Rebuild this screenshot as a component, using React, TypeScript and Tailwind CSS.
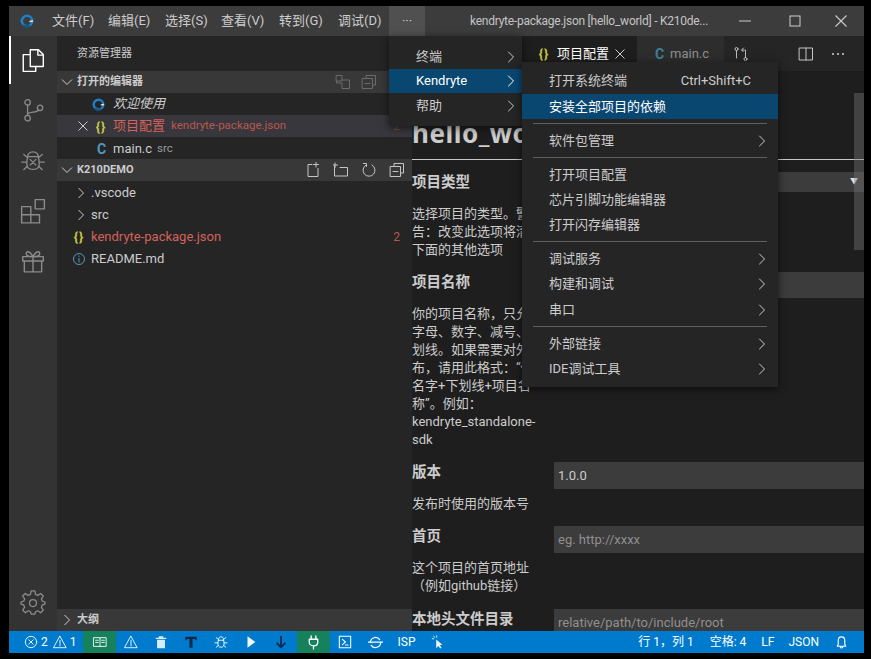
import type { ReactNode } from "react";

const FONT = { fontFamily: 'Roboto, "Noto Sans CJK SC", sans-serif' };

function Icon({ size = 16, box = 16, className, children }: { size?: number; box?: number; className?: string; children: ReactNode }) {
  return (
    <svg
      width={size}
      height={size}
      viewBox={`0 0 ${box} ${box}`}
      fill="none"
      stroke="currentColor"
      strokeWidth={1}
      strokeLinecap="round"
      strokeLinejoin="round"
      className={className}
    >
      {children}
    </svg>
  );
}

function Chevron({ className }: { className?: string }) {
  return (
    <Icon size={16} className={className}>
      <path d="M5.5 3 L10.5 8 L5.5 13" />
    </Icon>
  );
}

function SmallChevron({ down }: { down?: boolean }) {
  return (
    <svg width="12" height="12" viewBox="0 0 12 12" fill="none" stroke="currentColor" strokeWidth={1}>
      {down ? <path d="M1 3.5 L6 8.5 L11 3.5" /> : <path d="M3.5 1 L8.5 6 L3.5 11" />}
    </svg>
  );
}

function Logo({ size = 14 }: { size?: number }) {
  return (
    <svg width={size} height={size} viewBox="0 0 14 14" fill="none">
      <circle cx="7" cy="7" r="5.2" stroke="#1f7fc4" strokeWidth={2.6} />
      <path d="M3 11 A5.4 5.4 0 0 0 9.5 11.8" stroke="#14557f" strokeWidth={2.4} />
      <path d="M9.5 7.5 L13 7" stroke="#dfe8ee" strokeWidth={1.4} />
    </svg>
  );
}

function ActivityIcons() {
  return (
    <>
      <div className="flex h-[48px] w-full items-center justify-center border-l-2 border-white text-white">
        <Icon size={26} box={24} className="-ml-[2px]">
          <path d="M9.5 2.5 H17 L21.5 7 V18 H9.5 Z" fill="#333333" strokeWidth={1.3} />
          <path d="M16.5 2.5 V7.5 H21.5" strokeWidth={1.3} />
          <path d="M9.5 7 H3 V22.5 H14.5 V18" strokeWidth={1.3} />
        </Icon>
      </div>
      <div className="flex h-[52px] w-full items-center justify-center text-[#8b8b8b]">
        <Icon size={26} box={24}>
          <circle cx="7" cy="5" r="2.5" strokeWidth={1.2} />
          <circle cx="7" cy="19.5" r="2.5" strokeWidth={1.2} />
          <circle cx="18.5" cy="10" r="2.5" strokeWidth={1.2} />
          <path d="M7 7.5 V17 M7 16 C8 13 16 15 17 12" strokeWidth={1.2} />
        </Icon>
      </div>
      <div className="flex h-[50px] w-full items-center justify-center text-[#8b8b8b]">
        <Icon size={26} box={24}>
          <path d="M7 9 C7 5 9 3.5 12 3.5 C15 3.5 17 5 17 9 C18 13 18 16 17 17.5 C15.5 20.5 8.5 20.5 7 17.5 C6 16 6 13 7 9 Z" strokeWidth={1.2} />
          <path d="M7 8 H17 M9.3 10.5 L14.7 15.8 M14.7 10.5 L9.3 15.8" strokeWidth={1.2} />
          <path d="M6.5 8.5 L3.5 6 M6 13 H1.5 M6.5 17 L3.5 20 M17.5 8.5 L20.5 6 M18 13 H22.5 M17.5 17 L20.5 20" strokeWidth={1.2} />
        </Icon>
      </div>
      <div className="flex h-[50px] w-full items-center justify-center text-[#8b8b8b]">
        <Icon size={26} box={24}>
          <path d="M1.5 8 H10 V15.5 H18 V23 H1.5 Z M1.5 15.5 H10 V23" strokeWidth={1.3} />
          <rect x="14" y="1.5" width="8.5" height="8.5" strokeWidth={1.3} />
        </Icon>
      </div>
      <div className="flex h-[50px] w-full items-center justify-center text-[#8b8b8b]">
        <Icon size={26} box={24}>
          <path d="M2.5 8 H21.5 V12 H2.5 Z M4 12 V22 H20 V12 M12 8 V22" strokeWidth={1.3} />
          <path d="M12 8 C9 2 5 2.5 6 6 C6.3 7.3 8 8 12 8 C16 8 17.7 7.3 18 6 C19 2.5 15 2 12 8" strokeWidth={1.3} />
        </Icon>
      </div>
    </>
  );
}

function Gear() {
  return (
    <svg width="26" height="26" viewBox="0 0 24 24" fill="none" stroke="#8b8b8b" strokeWidth={1.2} strokeLinejoin="round">
      <path d="M10.3 1.8 H13.7 L14.3 5 L16.4 5.9 L19.1 4.1 L21.5 6.5 L19.7 9.2 L20.6 11.3 L23 12 V14 L20.6 14.7 L19.7 16.8 L21.5 19.5 L19.1 21.9 L16.4 20.1 L14.3 21 L13.7 23.2 H10.3 L9.7 21 L7.6 20.1 L4.9 21.9 L2.5 19.5 L4.3 16.8 L3.4 14.7 L1 14 V12 L3.4 11.3 L4.3 9.2 L2.5 6.5 L4.9 4.1 L7.6 5.9 L9.7 5 Z" />
      <circle cx="12" cy="13" r="3.2" />
    </svg>
  );
}

function Braces({ className }: { className?: string }) {
  return (
    <span className={`w-[14px] text-center text-[13px] leading-none font-bold tracking-[1px] text-[#cbcb41] ${className ?? ""}`}>{"{}"}</span>
  );
}

function SectionHeader({ open, title, children }: { open?: boolean; title: string; children?: ReactNode }) {
  return (
    <div className="flex h-[22px] shrink-0 items-center bg-[#383838] pl-[4px] text-[#cccccc]">
      <SmallChevron down={open} />
      <span className="ml-[4px] text-[11px] font-bold">{title}</span>
      <div className="ml-auto flex items-center">{children}</div>
    </div>
  );
}

function MenuRow({
  label,
  active,
  arrow,
  shortcut,
  height,
  arrowClass = "mr-[8px]",
}: {
  label: string;
  active?: boolean;
  arrow?: boolean;
  shortcut?: string;
  height: string;
  arrowClass?: string;
}) {
  return (
    <div className={`flex items-center pl-[27px] text-[13px] ${height} ${active ? "bg-[#094771] text-white" : "text-[#cccccc]"}`}>
      <span>{label}</span>
      {shortcut ? <span className="ml-auto pr-[27px]">{shortcut}</span> : null}
      {arrow ? <Chevron className={`ml-auto ${arrowClass}`} /> : null}
    </div>
  );
}

function Sep() {
  return <div className="mx-[11px] my-[4px] h-px bg-[#606060]" />;
}

function Field({ title, children, control, gap }: { title: string; children: ReactNode; control: ReactNode; gap: string }) {
  return (
    <div className={`grid grid-cols-[142px_1fr] ${gap}`}>
      <div className="text-[13px] leading-[18px] text-[#cccccc]">
        <div className="mb-[12px] text-[14.5px] leading-[21px] font-bold">{title}</div>
        {children}
      </div>
      {control}
    </div>
  );
}

function Input({ value, placeholder, h }: { value?: string; placeholder?: string; h: string }) {
  return (
    <div className={`flex items-center bg-[#3c3c3c] px-[4px] text-[13px] ${h} ${placeholder ? "text-[#8f8f8f]" : "text-[#cccccc]"}`}>
      {value ?? placeholder}
    </div>
  );
}

export default function App() {
  return (
    <div className="relative h-screen w-screen overflow-hidden bg-black pt-[6px] pr-[7px] pb-[6px] pl-[9px]" style={FONT}>
      <div className="flex h-full flex-col">
        {/* title bar */}
        <div className="flex h-[30px] shrink-0 items-center bg-[#3c3c3c] text-[13px] whitespace-nowrap text-[#cccccc]">
          <div className="flex w-[36px] justify-center">
            <Logo />
          </div>
          <div className="ml-[7px] flex w-[337px]">
            <span className="w-[56px]">文件(F)</span>
            <span className="w-[57px]">编辑(E)</span>
            <span className="w-[56px]">选择(S)</span>
            <span className="w-[58px]">查看(V)</span>
            <span className="w-[59px]">转到(G)</span>
            <span>调试(D)</span>
          </div>
          <div className="flex h-full w-[36px] items-center justify-center bg-[#505050]">···</div>
          <div className="ml-[45px] text-[12px] tracking-[-0.25px] text-[#c4c4c4]">kendryte-package.json [hello_world] - K210de...</div>
          <div className="ml-auto flex h-full items-center pr-[17px]">
            <svg width="12" height="12" viewBox="0 0 12 12" stroke="#cccccc" className="mr-[38px]">
              <path d="M0 6 H12" />
            </svg>
            <svg width="12" height="12" viewBox="0 0 12 12" fill="none" stroke="#cccccc" className="mr-[34px]">
              <rect x="1" y="1" width="10" height="10" />
            </svg>
            <svg width="12" height="12" viewBox="0 0 12 12" stroke="#cccccc" strokeWidth={1.1}>
              <path d="M0.5 0.5 L11.5 11.5 M11.5 0.5 L0.5 11.5" />
            </svg>
          </div>
        </div>

        <div className="flex min-h-0 flex-1">
          {/* activity bar */}
          <div className="flex w-[48px] shrink-0 flex-col items-center bg-[#333333]">
            <ActivityIcons />
            <div className="mt-auto mb-[16px]">
              <Gear />
            </div>
          </div>

          {/* side bar */}
          <div className="flex w-[355px] shrink-0 flex-col bg-[#252526] text-[13px] text-[#cccccc]">
            <div className="flex h-[35px] shrink-0 items-center pt-[2px] pl-[20px] text-[11px]">资源管理器</div>
            <SectionHeader open title="打开的编辑器">
              <div className="mr-[35px] flex gap-[10px] text-[#6b6b6b]">
                <Icon>
                  <path d="M1.5 1.5 H7 V7 H1.5 Z M7 6 H14.5 V14.5 H7 V9 H1.5 V7" />
                </Icon>
                <Icon>
                  <path d="M5 4 V1.5 H14.5 V11 H12 M1.5 4.5 H11.5 V14.5 H1.5 Z M4 9.5 H9" />
                </Icon>
              </div>
            </SectionHeader>
            <div className="flex h-[22px] shrink-0 items-center pl-[35px]">
              <Logo size={13} />
              <span className="ml-[8px] italic">欢迎使用</span>
            </div>
            <div className="flex h-[22px] shrink-0 items-center bg-[#37373d] pl-[21px]">
              <svg width="10" height="10" viewBox="0 0 10 10" stroke="#cccccc">
                <path d="M0.5 0.5 L9.5 9.5 M9.5 0.5 L0.5 9.5" />
              </svg>
              <Braces className="ml-[6px]" />
              <span className="ml-[5px] text-[#d4625a]">项目配置</span>
              <span className="ml-[6px] text-[11.5px] text-[#b9574f]">kendryte-package.json</span>
              <span className="mr-[12px] ml-auto text-[12px] text-[#7c4540]">2</span>
            </div>
            <div className="flex h-[22px] shrink-0 items-center pt-[1px] pl-[40px]">
              <span className="w-[8px] text-[14px] leading-none font-bold text-[#519aba]">C</span>
              <span className="ml-[8px]">main.c</span>
              <span className="ml-[5px] text-[11.5px] text-[#999999]">src</span>
            </div>
            <SectionHeader open title="K210DEMO">
              <div className="mr-[7px] flex gap-[12px] text-[#c5c5c5]">
                <Icon>
                  <path d="M7 2.5 H3 V14.5 H13 V6.5 M11 0.5 V5 M8.5 2.5 H13.5" />
                </Icon>
                <Icon>
                  <path d="M1.5 4 V14 H14.5 V5.5 H7 M2 1 V5.5 M0 3 H4.5" />
                </Icon>
                <Icon>
                  <path d="M5 3 A6 6 0 1 0 11 3 M2.5 1.5 H5.5 V4.5" />
                </Icon>
                <Icon>
                  <path d="M5 4 V1.5 H14.5 V11 H12 M1.5 4.5 H11.5 V14.5 H1.5 Z M4 9.5 H9" />
                </Icon>
              </div>
            </SectionHeader>
            <div className="flex h-[22px] shrink-0 items-center pt-[1px] pl-[18px]">
              <SmallChevron />
              <span className="ml-[4px]">.vscode</span>
            </div>
            <div className="flex h-[22px] shrink-0 items-center pt-[1px] pl-[18px]">
              <SmallChevron />
              <span className="ml-[4px]">src</span>
            </div>
            <div className="flex h-[22px] shrink-0 items-center pt-[1px] pl-[15px]">
              <Braces />
              <span className="ml-[5px] text-[#d4625a]">kendryte-package.json</span>
              <span className="mr-[12px] ml-auto text-[12px] text-[#b9574f]">2</span>
            </div>
            <div className="flex h-[22px] shrink-0 items-center pt-[1px] pl-[15px]">
              <svg width="14" height="14" viewBox="0 0 14 14" fill="none" stroke="#519aba">
                <circle cx="7" cy="7" r="5.5" />
                <path d="M7 6 V10.5 M7 3.5 V4.8" />
              </svg>
              <span className="ml-[5px]">README.md</span>
            </div>
            <div className="mt-auto">
              <SectionHeader title="大纲" />
            </div>
          </div>

          {/* editor */}
          <div className="relative flex min-w-0 flex-1 flex-col overflow-hidden bg-[#1e1e1e]">
            <div className="flex h-[35px] shrink-0 items-center bg-[#252526] text-[13px]">
              <div className="w-[110px] self-stretch" />
              <div className="flex h-full w-[115px] items-center bg-[#1e1e1e] pl-[15px] text-[#ffffff]">
                <Braces />
                <span className="ml-[6px]">项目配置</span>
                <svg width="10" height="10" viewBox="0 0 10 10" stroke="#cccccc" className="ml-[6px]">
                  <path d="M0.5 0.5 L9.5 9.5 M9.5 0.5 L0.5 9.5" />
                </svg>
              </div>
              <div className="flex h-full w-[87px] items-center bg-[#2d2d2d] pl-[18px] text-[#8f8f8f]">
                <span className="w-[8px] text-[14px] leading-none font-bold text-[#3f7f9b]">C</span>
                <span className="ml-[7px]">main.c</span>
              </div>
              <Icon size={16} className="ml-[9px] text-[#c5c5c5]">
                <circle cx="3.5" cy="3" r="1.5" />
                <circle cx="12.5" cy="13" r="1.5" />
                <path d="M3.5 4.5 V12 M12.5 11.5 V4 H8.5 M10.5 2 L8.5 4 L10.5 6" strokeDasharray="2 1" />
              </Icon>
              <div className="ml-auto mr-[18px] flex items-center gap-[16px] text-[#c5c5c5]">
                <Icon>
                  <rect x="1.5" y="2" width="13" height="12" />
                  <path d="M8 2 V14" />
                </Icon>
                <svg width="16" height="16" viewBox="0 0 16 16" fill="currentColor">
                  <circle cx="3" cy="8" r="1.1" />
                  <circle cx="8" cy="8" r="1.1" />
                  <circle cx="13" cy="8" r="1.1" />
                </svg>
              </div>
            </div>

            <div className="min-h-0 flex-1 overflow-hidden">
              <h1
                className="mt-[43px] h-[45px] text-[26px] leading-[38px] font-bold tracking-[0.5px] text-[#cccccc]"
                style={{ fontFamily: '"Noto Sans", sans-serif' }}
              >
                hello_world
              </h1>
              <div className="h-px bg-[#c8c8c8]" />
              <div className="mt-[12px] flex flex-col">
                <Field
                  title="项目类型"
                  gap="pb-[13px]"
                  control={
                    <div className="flex h-[20px] items-center justify-end bg-[#3c3c3c] pr-[6px] text-[8px] text-[#e0e0e0]">▼</div>
                  }
                >
                  选择项目的类型。警
                  <br />
                  告：改变此选项将清
                  <br />
                  下面的其他选项
                </Field>
                <Field title="项目名称" gap="pb-[13px]" control={<Input h="h-[26px]" />}>
                  你的项目名称，只允
                  <br />
                  字母、数字、减号、下
                  <br />
                  划线。如果需要对外发
                  <br />
                  布，请用此格式：“你的
                  <br />
                  名字+下划线+项目名
                  <br />
                  称”。例如：
                  <br />
                  kendryte_standalone-
                  <br />
                  sdk
                </Field>
                <Field title="版本" gap="pb-[13px]" control={<Input value="1.0.0" h="h-[27px]" />}>
                  发布时使用的版本号
                </Field>
                <Field title="首页" gap="pb-[14px]" control={<Input placeholder="eg. http://xxxx" h="h-[27px]" />}>
                  这个项目的首页地址
                  <br />
                  （例如github链接）
                </Field>
                <Field title="本地头文件目录" gap="pb-0" control={<Input placeholder="relative/path/to/include/root" h="h-[27px]" />}>
                  {""}
                </Field>
              </div>
            </div>
            {/* scrollbar */}
            <div className="absolute top-[57px] right-0 h-[157px] w-[10px] bg-[#79797966]" />
          </div>
        </div>

        {/* status bar */}
        <div className="flex h-[22px] shrink-0 items-center bg-[#007acc] text-[12px] text-white">
          <div className="ml-[15px] flex w-[59px] items-center gap-[3px]">
            <Icon size={14}>
              <circle cx="8" cy="8" r="6.5" />
              <path d="M5.5 5.5 L10.5 10.5 M10.5 5.5 L5.5 10.5" />
            </Icon>
            <span>2</span>
            <Icon size={14} className="ml-[2px]">
              <path d="M8 1.5 L15 14.5 H1 Z M8 6 V10.5 M8 11.5 V12.5" />
            </Icon>
            <span>1</span>
          </div>
          <div className="flex h-full w-[33px] items-center justify-center bg-[#16825d]">
            <Icon size={14}>
              <path d="M1 3 H7.5 L8 4 L8.5 3 H15 V13 H1 Z M8 4 V13 M3 6 H6 M3 8.5 H6 M10 6 H13 M10 8.5 H13" />
            </Icon>
          </div>
          <div className="flex w-[30px] justify-center">
            <Icon size={14}>
              <path d="M8 1.5 L15 14.5 H1 Z M8 6 V10.5 M8 11.5 V12.5" />
            </Icon>
          </div>
          <div className="flex w-[30px] justify-center">
            <svg width="14" height="14" viewBox="0 0 16 16" fill="#d8ecf8">
              <path d="M5.5 1.5 H10.5 V3 H14 V4.5 H2 V3 H5.5 Z M3.5 5.5 H12.5 V15 H3.5 Z" />
            </svg>
          </div>
          <div className="flex w-[30px] justify-center">
            <svg width="14" height="14" viewBox="0 0 16 16" fill="#0b2a4a">
              <path d="M1.5 2 H14.5 V6 H13 L12.5 4.5 H9.8 V14.5 H6.2 V4.5 H3.5 L3 6 H1.5 Z" />
            </svg>
          </div>
          <div className="flex w-[30px] justify-center">
            <Icon size={14}>
              <path d="M5 6 C5 3 6.5 2 8 2 C9.5 2 11 3 11 6 C11.7 9 11.7 11 11 12.5 C10 14.5 6 14.5 5 12.5 C4.3 11 4.3 9 5 6 Z M5 6 H11 M5 5 L2.5 3 M4.5 9 H1 M5 12 L2.5 14 M11 5 L13.5 3 M11.5 9 H15 M11 12 L13.5 14" />
            </Icon>
          </div>
          <div className="flex w-[30px] justify-center">
            <svg width="14" height="14" viewBox="0 0 16 16" fill="#f2f8fc">
              <path d="M4 1.5 L13 8 L4 14.5 Z" />
            </svg>
          </div>
          <div className="flex w-[30px] justify-center">
            <svg width="14" height="14" viewBox="0 0 16 16" fill="none" stroke="#0b2a4a" strokeWidth={2}>
              <path d="M8 1 V14 M3 9 L8 14 L13 9" />
            </svg>
          </div>
          <div className="ml-[1px] flex h-full w-[33px] items-center justify-center bg-[#16825d]">
            <Icon size={15}>
              <path d="M5.5 1 V4.5 M10.5 1 V4.5 M3.5 4.5 H12.5 V8 C12.5 10 10.5 11.5 8 11.5 C5.5 11.5 3.5 10 3.5 8 Z M8 11.5 V15" strokeWidth={1.4} />
            </Icon>
          </div>
          <div className="flex w-[30px] justify-center">
            <Icon size={14}>
              <rect x="1.5" y="1.5" width="13" height="13" strokeWidth={1.2} />
              <path d="M5 5 L8.5 8 L5 11 M8.5 11.5 H11.5" strokeWidth={1.2} />
            </Icon>
          </div>
          <div className="flex w-[30px] justify-center">
            <Icon size={15}>
              <path d="M2.5 8 A5.5 5.5 0 0 1 12.5 5 M13.5 8 A5.5 5.5 0 0 1 3.5 11 M0.5 7.5 H15.5" strokeWidth={1.3} />
            </Icon>
          </div>
          <span className="ml-[1px] w-[31px] text-center text-[12px]">ISP</span>
          <div className="ml-[9px] flex w-[14px] justify-center">
            <svg width="14" height="14" viewBox="0 0 16 16" fill="#f2f8fc">
              <path d="M6 5 L6 15 L8.5 12.5 L10.5 15.5 L12 14.5 L10 11.5 L13 11 Z" />
              <path d="M3 1 L4 3 M6.5 0.5 L6.5 3 M1 4 L3.5 4.5" stroke="#f2f8fc" fill="none" />
            </svg>
          </div>
          <div className="ml-auto flex items-center pr-[15px]">
            <span>行 1，列 1</span>
            <span className="ml-[16px]">空格: 4</span>
            <span className="ml-[15px]">LF</span>
            <span className="ml-[14px]">JSON</span>
            <Icon size={15} className="ml-[15px]">
              <path d="M3.5 12 H12.5 L11.5 10 V6 C11.5 3.5 10 2 8 2 C6 2 4.5 3.5 4.5 6 V10 Z M6.5 12 C6.5 14.5 9.5 14.5 9.5 12" strokeWidth={1.2} />
            </Icon>
          </div>
        </div>
      </div>

      {/* menu overflow popup */}
      <div className="absolute top-[36px] left-[389px] w-[133px] bg-[#252526] pt-[8px] pb-[7px] shadow-[0_2px_8px_rgba(0,0,0,0.6)]">
        <MenuRow label="终端" arrow arrowClass="mr-[3px]" height="h-[25px]" />
        <MenuRow label="Kendryte" arrow arrowClass="mr-[3px]" active height="h-[24px]" />
        <MenuRow label="帮助" arrow arrowClass="mr-[3px]" height="h-[26px]" />
      </div>

      {/* Kendryte submenu */}
      <div className="absolute top-[62px] left-[522px] w-[256px] bg-[#252526] pt-[6px] pb-[6px] shadow-[0_2px_8px_rgba(0,0,0,0.6)]">
        <MenuRow label="打开系统终端" shortcut="Ctrl+Shift+C" height="h-[26px]" />
        <MenuRow label="安装全部项目的依赖" active height="h-[25px]" />
        <Sep />
        <MenuRow label="软件包管理" arrow height="h-[25px]" />
        <Sep />
        <MenuRow label="打开项目配置" height="h-[25px]" />
        <MenuRow label="芯片引脚功能编辑器" height="h-[26px]" />
        <MenuRow label="打开闪存编辑器" height="h-[24px]" />
        <Sep />
        <MenuRow label="调试服务" arrow height="h-[25px]" />
        <MenuRow label="构建和调试" arrow height="h-[26px]" />
        <MenuRow label="串口" arrow height="h-[25px]" />
        <Sep />
        <MenuRow label="外部链接" arrow height="h-[25px]" />
        <MenuRow label="IDE调试工具" arrow height="h-[25px]" />
      </div>
    </div>
  );
}
